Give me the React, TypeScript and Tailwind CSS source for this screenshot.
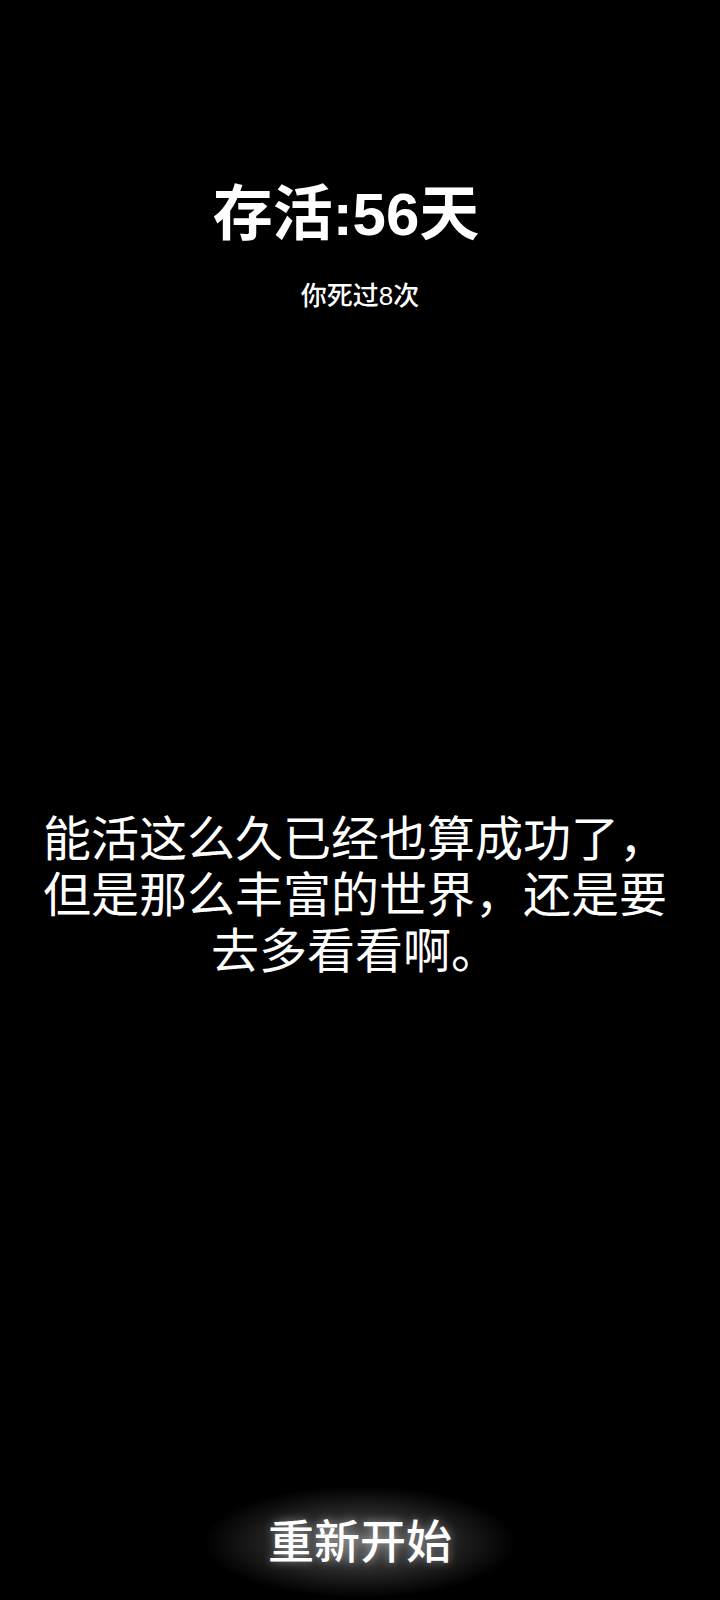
import { FC } from 'react';

const lines = '能活这么久已经也算成功了，但是那么丰富的世界，还是要去多看看啊。';

const App: FC = () => {
  return (
    <div className="flex h-[1600px] w-full flex-col items-center bg-black text-white font-['Liberation_Sans','Noto_Sans_CJK_SC',sans-serif]">
      <h1 className="mt-[179px] pr-7 text-[60px] font-semibold leading-[72px]">存活:56天</h1>
      <p className="mt-[29px] text-[26px] font-medium leading-[32px]">你死过8次</p>

      <p className="mt-[500px] w-full pl-[26px] pr-[36px] text-center text-[48px] leading-[56px]">
        {lines}
      </p>

      {/* soft grey halo behind the restart label */}
      <button
        type="button"
        className="mt-auto mb-[2px] px-[64px] py-[28px] text-[46px] font-medium leading-[56px] text-white bg-[radial-gradient(ellipse_closest-side_at_center,rgba(255,255,255,0.38)_0%,rgba(255,255,255,0.16)_50%,rgba(0,0,0,0)_100%)] [text-shadow:0_0_10px_rgba(255,255,255,0.45)]"
      >
        重新开始
      </button>
    </div>
  );
};

export default App;
